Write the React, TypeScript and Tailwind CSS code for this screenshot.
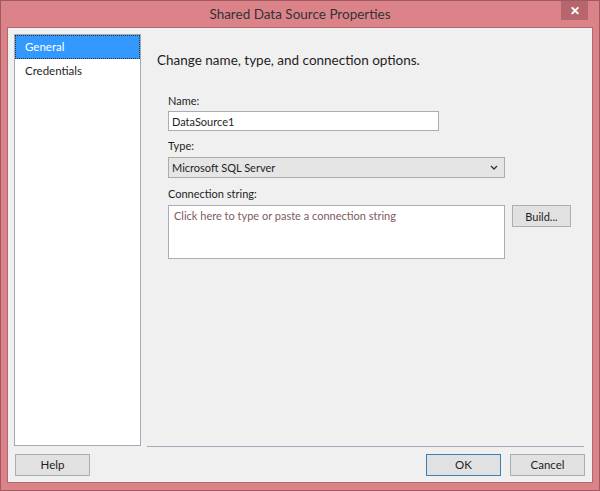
import React from "react";

const font = { fontFamily: 'Lato, "Noto Sans", Arial, sans-serif' };

function Btn({ label, primary, className }: { label: string; primary?: boolean; className?: string }) {
  return (
    <button
      className={`h-[22px] w-[75px] border bg-[#e1e1e1] text-[11.5px] text-[#1e1e1e] ${
        primary ? "border-[#3c7fb1]" : "border-[#adadad]"
      } ${className ?? ""}`}
    >
      {label}
    </button>
  );
}

export default function App() {
  return (
    <div style={font} className="h-[491px] w-[600px] border border-[#9e5a60] bg-[#db8389]">
      {/* title bar */}
      <div className="relative flex h-[26px] items-center justify-center">
        <span className="text-[13.5px] text-[#333]">Shared Data Source Properties</span>
        <div className="absolute right-[11px] top-0 flex h-[19px] w-[27px] items-center justify-center bg-[#b5676d] text-[12px] font-bold leading-none text-white">
          ✕
        </div>
      </div>

      {/* client */}
      <div className="mx-[6px] flex h-[456px] flex-col border border-[#b06a70] bg-[#f0f0f0] pt-[6px]">
        <div className="flex h-[413px]">
          {/* nav list */}
          <div className="ml-[6px] h-[412px] w-[127px] border border-[#a0aab8] bg-white text-[11.5px] text-[#1e1e1e]">
            <div className="flex h-[24px] items-center border border-dotted border-[#333] bg-[#3399ff] pl-[9px] text-white">
              General
            </div>
            <div className="flex h-[24px] items-center pl-[10px]">Credentials</div>
          </div>

          {/* page */}
          <div className="ml-[6px] flex w-[437px] flex-col border-b border-[#a0aab8] pl-[10px] text-[#1e1e1e]">
            <div className="mt-[16px] text-[13.5px] leading-[20px]">Change name, type, and connection options.</div>

            <div className="ml-[11px] mt-[23px] flex flex-col text-[11px] leading-[15px]">
              <label>Name:</label>
              <div className="mt-[3px] flex h-[20px] w-[271px] items-center border border-[#abadb3] bg-white pl-[3px]">
                DataSource1
              </div>

              <label className="mt-[7px]">Type:</label>
              <div className="mt-[4px] flex h-[21px] w-[337px] items-center justify-between border border-[#acacac] bg-[#e5e5e5] pl-[3px] pr-[6px]">
                <span>Microsoft SQL Server</span>
                <svg width="8" height="5" viewBox="0 0 8 5">
                  <path d="M1 1 L4 4 L7 1" stroke="#333" strokeWidth="1.4" fill="none" />
                </svg>
              </div>

              <label className="mt-[8px]">Connection string:</label>
              <div className="mt-[4px] flex items-start gap-[7px]">
                <div className="h-[54px] w-[337px] border border-[#abadb3] bg-white pl-[5px] pt-[2px] text-[#7d5c62]">
                  Click here to type or paste a connection string
                </div>
                <button className="h-[22px] w-[59px] border border-[#adadad] bg-[#e1e1e1]">Build...</button>
              </div>
            </div>
          </div>
        </div>

        {/* buttons */}
        <div className="mt-[7px] flex items-center px-[7px]">
          <Btn label="Help" />
          <div className="ml-auto flex gap-[9px]">
            <Btn label="OK" primary className="w-[74px]" />
            <Btn label="Cancel" />
          </div>
        </div>
      </div>
    </div>
  );
}
